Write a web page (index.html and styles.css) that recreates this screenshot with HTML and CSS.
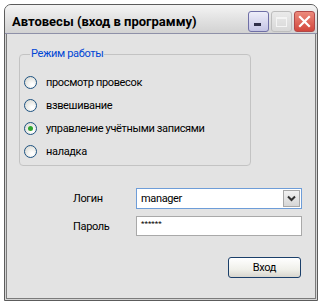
FILE: index.html
```html
<!DOCTYPE html>
<html lang="ru">
<head>
  <meta charset="UTF-8" />
  <title>Автовесы (вход в программу)</title>
  <link rel="stylesheet" href="styles.css">
</head>
<body>
  <div class="window">
    <div class="titlebar">
      <span class="title">Автовесы (вход в программу)</span>
      <div class="caption-btns">
        <span class="cbtn cbtn-min"><i></i></span>
        <span class="cbtn cbtn-max"><i></i></span>
        <span class="cbtn cbtn-close">
          <svg width="13" height="13" viewBox="0 0 13 13"><path d="M2 2 L11 11 M11 2 L2 11" stroke="#fff" stroke-width="2.2" stroke-linecap="square"/></svg>
        </span>
      </div>
    </div>

    <div class="client">
      <fieldset class="mode">
        <legend>Режим работы</legend>
        <label class="radio"><span class="dot"></span>просмотр провесок</label>
        <label class="radio"><span class="dot"></span>взвешивание</label>
        <label class="radio"><span class="dot checked"></span>управление учётными записями</label>
        <label class="radio"><span class="dot"></span>наладка</label>
      </fieldset>

      <div class="login-form">
        <span class="lbl">Логин</span>
        <div class="combo">
          <span class="combo-text">manager</span>
          <span class="combo-btn">
            <svg width="9" height="7" viewBox="0 0 9 7"><path d="M1 1.5 L4.5 5 L8 1.5" fill="none" stroke="#333" stroke-width="2"/></svg>
          </span>
        </div>
        <span class="lbl">Пароль</span>
        <div class="pass">******</div>
      </div>

      <div class="actions">
        <button class="btn">Вход</button>
      </div>
    </div>
  </div>
</body>
</html>
```

FILE: styles.css
```css
* { box-sizing: border-box; }
body {
  margin: 0;
  background: #fff;
  font-family: Roboto, 'Noto Sans', sans-serif;
  font-size: 11px;
  letter-spacing: -0.35px;
  color: #000;
}
.window {
  margin: 4px 0 0 4px;
  width: 314px;
  height: 297px;
  border: 1px solid #5c5c5c;
  border-radius: 7px 7px 0 0;
  background: #d4d4d4;
  display: flex;
  flex-direction: column;
  overflow: hidden;
}
.titlebar {
  height: 29px;
  flex-shrink: 0;
  display: flex;
  align-items: flex-end;
  justify-content: space-between;
  padding: 0 2px 1px 7px;
  background: linear-gradient(#f4f4f4, #e2e2e2 50%, #d2d2d2);
  border-bottom: 1px solid #8e90a8;
}
.title {
  font-weight: bold;
  font-size: 13px;
  letter-spacing: 0;
  line-height: 14px;
  margin-bottom: 3px;
}
.caption-btns {
  display: flex;
  gap: 2px;
}
.cbtn {
  width: 21px;
  height: 21px;
  border-radius: 3px;
  display: flex;
  align-items: center;
  justify-content: center;
}
.cbtn-min {
  border: 1px solid #6f6fa6;
  background: linear-gradient(#eeeefa, #c4c4e4);
  align-items: flex-end;
  justify-content: flex-start;
  padding: 0 0 5px 5px;
}
.cbtn-min i {
  display: block;
  width: 7px;
  height: 3px;
  background: #2e2e48;
}
.cbtn-max {
  border: 1px solid #bdbdbd;
  background: linear-gradient(#eaeaea, #d8d8d8);
}
.cbtn-max i {
  display: block;
  width: 11px;
  height: 10px;
  border: 1px solid #f4f4f4;
  border-top-width: 2px;
}
.cbtn-close {
  border: 1px solid #b04848;
  background: linear-gradient(#ec8a7c, #d2473c);
}
.client {
  flex: 1;
  margin: 0 1px 1px;
  border: 1px solid #7b7b7b;
  border-top: none;
  background: #e3e3e3;
  padding: 13px 0 0 12px;
}
.mode {
  width: 232px;
  margin: 0;
  padding: 10px 0 2px 4px;
  border: 1px solid #c3c3c3;
  border-radius: 4px;
}
.mode legend {
  color: #0046d5;
  padding: 0 1px;
  margin-left: 6px;
  line-height: 14px;
}
.radio {
  display: flex;
  align-items: center;
  height: 23px;
  gap: 9px;
}
.dot {
  width: 13px;
  height: 13px;
  border-radius: 50%;
  border: 1px solid #1d5281;
  background: radial-gradient(circle at 65% 70%, #fff 10%, #dcdcd6 80%);
  display: flex;
  align-items: center;
  justify-content: center;
}
.dot.checked::after {
  content: '';
  width: 5px;
  height: 5px;
  border-radius: 50%;
  background: #2fa52f;
}
.login-form {
  display: grid;
  grid-template-columns: 63px 166px;
  grid-template-rows: 21px 20px;
  row-gap: 7px;
  align-items: center;
  margin: 22px 0 0 54px;
}
.combo {
  height: 21px;
  border: 1px solid #6e9dd8;
  background: #fff;
  display: flex;
  align-items: center;
  justify-content: space-between;
  padding: 0 1px 0 4px;
}
.combo-btn {
  width: 17px;
  height: 17px;
  border: 1px solid #a8a8a8;
  background: linear-gradient(#f2f2f2, #d6d6d6);
  display: flex;
  align-items: center;
  justify-content: center;
}
.pass {
  height: 20px;
  border: 1px solid #a9a9a9;
  background: #fff;
  font-size: 8px;
  letter-spacing: 0;
  line-height: 8px;
  padding: 3px 0 0 4px;
}
.actions {
  display: flex;
  justify-content: flex-end;
  margin: 21px 14px 0 0;
}
.btn {
  width: 73px;
  height: 21px;
  border: 1px solid #1b3f6a;
  border-radius: 3px;
  background: linear-gradient(#ffffff, #f0f0ea 60%, #d8d6ce);
  font-family: Roboto, 'Noto Sans', sans-serif;
  font-size: 11px;
  letter-spacing: -0.35px;
  color: #000;
  padding: 0;
}
```
